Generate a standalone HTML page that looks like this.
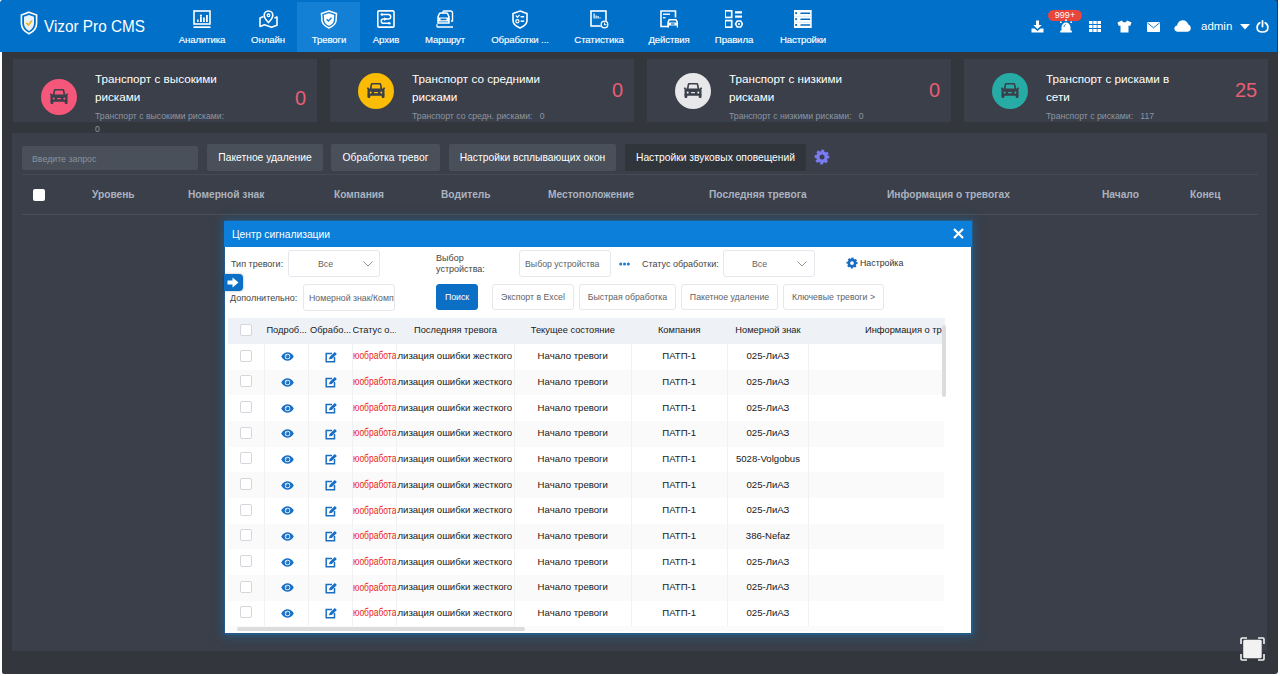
<!DOCTYPE html>
<html><head><meta charset="utf-8">
<style>
*{box-sizing:border-box;margin:0;padding:0}
html,body{width:1280px;height:676px;overflow:hidden;background:#fff;font-family:"Liberation Sans",sans-serif}
.abs{position:absolute}
#win{position:absolute;left:2px;top:0;width:1276px;height:674px;background:#33373d;border-radius:0 0 3px 2px;overflow:hidden}
#hdr{position:absolute;left:0;top:0;width:1277px;height:52px;border-radius:3px 3px 0 0;background:#0070c8}
.nav{position:absolute;top:0;height:51px;color:#fff;font-size:9.5px;text-align:center}
.nav svg{position:absolute;top:10px}
.nav span{position:absolute;top:33.6px;left:0;right:0;white-space:nowrap;font-size:9.6px;letter-spacing:-0.1px;-webkit-text-stroke:0.15px #fff}
.card{position:absolute;top:59px;height:63px;width:304px;background:#3a3f49}
.card .ic{position:absolute;left:28px;top:21px;width:36px;height:36px;border-radius:50%}
.card .t{position:absolute;left:82px;top:11px;color:#fff;font-size:11.7px;line-height:18px;width:160px;white-space:nowrap}
.card .s{position:absolute;left:82px;top:51px;color:#8d96a3;font-size:8.7px;line-height:13px;width:160px;white-space:nowrap}
.card .n{position:absolute;top:21px;color:#e85d75;font-size:20px}
.btn{position:absolute;top:144px;height:27px;background:#4a5059;color:#fff;font-size:10.3px;line-height:28px;text-align:center;border-radius:2px;white-space:nowrap}
.th{position:absolute;top:189px;color:#aab3c0;font-size:10.2px;font-weight:bold;white-space:nowrap}
#modal{position:absolute;left:223px;top:221px;width:746px;height:412px;background:#fff;box-shadow:1px 0 0 1px #255b87,-1px 0 0 0 #255b87,0 2px 0 0 #255b87,0 1px 9px 3px rgba(37,91,135,0.75)}
#mh{position:absolute;left:-1px;top:0;width:748px;height:25.5px;background:#0b7fd9;color:#fff;font-size:10.3px;line-height:28px;padding-left:8px}
.lbl{position:absolute;color:#444;font-size:9px;white-space:nowrap}
.sel{position:absolute;height:27px;border:1px solid #e4e7ec;border-radius:3px;background:#fff;font-size:8.75px;color:#606266;line-height:26px;white-space:nowrap;overflow:hidden}
.mb{position:absolute;top:63px;height:26px;border:1px solid #e4e7ec;border-radius:3px;background:#fff;font-size:8.75px;color:#606266;line-height:25px;text-align:center;white-space:nowrap}
.tr{position:absolute;left:3px;width:716px;height:25.67px}
.tr.alt{background:#fafafa}
.cb{position:absolute;width:12px;height:12px;border:1px solid #d3d6db;border-radius:2px;background:#fff}
.ct{position:absolute;font-size:9.6px;color:#1a1a1a;white-space:nowrap}
.tr .ct{-webkit-text-stroke:0.03px currentColor}
.vl{position:absolute;top:97px;width:1px;height:310px;background:#f0f1f3}
</style></head><body>
<div id="win">
<div class="card" style="left:11px"><div class="ic" style="background:#f4577a;top:20px"><svg class="abs" style="left:9px;top:10px" width="18" height="15" viewBox="0 0 18 15"><path d="M3.6 6 L4.4 1.6 C4.5 1 4.9 0.7 5.5 0.7 H12.5 C13.1 0.7 13.5 1 13.6 1.6 L14.4 6" fill="none" stroke="#3a3f49" stroke-width="1.6"/><rect x="0" y="4.6" width="1.8" height="1.4" fill="#3a3f49"/><rect x="16.2" y="4.6" width="1.8" height="1.4" fill="#3a3f49"/><rect x="0.5" y="5.6" width="17" height="7.2" rx="1.2" fill="#3a3f49"/><rect x="0.5" y="11" width="2.8" height="4" rx="1" fill="#3a3f49"/><rect x="14.7" y="11" width="2.8" height="4" rx="1" fill="#3a3f49"/><circle cx="3.7" cy="9.6" r="1.05" fill="#f4577a"/><circle cx="14.3" cy="9.6" r="1.05" fill="#f4577a"/><rect x="7" y="9" width="4" height="1.3" rx="0.4" fill="#f4577a"/></svg></div><div class="t">Транспорт с высокими<br>рисками</div><div class="s">Транспорт с высокими рисками:<br>0</div><div class="n" style="left:282px;top:28px">0</div></div>
<div class="card" style="left:328px"><div class="ic" style="background:#fbbc05;top:14px"><svg class="abs" style="left:9px;top:10px" width="18" height="15" viewBox="0 0 18 15"><path d="M3.6 6 L4.4 1.6 C4.5 1 4.9 0.7 5.5 0.7 H12.5 C13.1 0.7 13.5 1 13.6 1.6 L14.4 6" fill="none" stroke="#3a3f49" stroke-width="1.6"/><rect x="0" y="4.6" width="1.8" height="1.4" fill="#3a3f49"/><rect x="16.2" y="4.6" width="1.8" height="1.4" fill="#3a3f49"/><rect x="0.5" y="5.6" width="17" height="7.2" rx="1.2" fill="#3a3f49"/><rect x="0.5" y="11" width="2.8" height="4" rx="1" fill="#3a3f49"/><rect x="14.7" y="11" width="2.8" height="4" rx="1" fill="#3a3f49"/><circle cx="3.7" cy="9.6" r="1.05" fill="#fbbc05"/><circle cx="14.3" cy="9.6" r="1.05" fill="#fbbc05"/><rect x="7" y="9" width="4" height="1.3" rx="0.4" fill="#fbbc05"/></svg></div><div class="t">Транспорт со средними<br>рисками</div><div class="s">Транспорт со средн. рисками:&nbsp;&nbsp;&nbsp;0</div><div class="n" style="left:282px;top:20px">0</div></div>
<div class="card" style="left:645px"><div class="ic" style="background:#e8e8ea;top:14px"><svg class="abs" style="left:9px;top:10px" width="18" height="15" viewBox="0 0 18 15"><path d="M3.6 6 L4.4 1.6 C4.5 1 4.9 0.7 5.5 0.7 H12.5 C13.1 0.7 13.5 1 13.6 1.6 L14.4 6" fill="none" stroke="#3a3f49" stroke-width="1.6"/><rect x="0" y="4.6" width="1.8" height="1.4" fill="#3a3f49"/><rect x="16.2" y="4.6" width="1.8" height="1.4" fill="#3a3f49"/><rect x="0.5" y="5.6" width="17" height="7.2" rx="1.2" fill="#3a3f49"/><rect x="0.5" y="11" width="2.8" height="4" rx="1" fill="#3a3f49"/><rect x="14.7" y="11" width="2.8" height="4" rx="1" fill="#3a3f49"/><circle cx="3.7" cy="9.6" r="1.05" fill="#e8e8ea"/><circle cx="14.3" cy="9.6" r="1.05" fill="#e8e8ea"/><rect x="7" y="9" width="4" height="1.3" rx="0.4" fill="#e8e8ea"/></svg></div><div class="t">Транспорт с низкими<br>рисками</div><div class="s">Транспорт с низкими рисками:&nbsp;&nbsp;&nbsp;0</div><div class="n" style="left:282px;top:20px">0</div></div>
<div class="card" style="left:962px"><div class="ic" style="background:#27aba5;top:14px"><svg class="abs" style="left:9px;top:10px" width="18" height="15" viewBox="0 0 18 15"><path d="M3.6 6 L4.4 1.6 C4.5 1 4.9 0.7 5.5 0.7 H12.5 C13.1 0.7 13.5 1 13.6 1.6 L14.4 6" fill="none" stroke="#3a3f49" stroke-width="1.6"/><rect x="0" y="4.6" width="1.8" height="1.4" fill="#3a3f49"/><rect x="16.2" y="4.6" width="1.8" height="1.4" fill="#3a3f49"/><rect x="0.5" y="5.6" width="17" height="7.2" rx="1.2" fill="#3a3f49"/><rect x="0.5" y="11" width="2.8" height="4" rx="1" fill="#3a3f49"/><rect x="14.7" y="11" width="2.8" height="4" rx="1" fill="#3a3f49"/><circle cx="3.7" cy="9.6" r="1.05" fill="#27aba5"/><circle cx="14.3" cy="9.6" r="1.05" fill="#27aba5"/><rect x="7" y="9" width="4" height="1.3" rx="0.4" fill="#27aba5"/></svg></div><div class="t">Транспорт с рисками в<br>сети</div><div class="s">Транспорт с рисками:&nbsp;&nbsp;&nbsp;117</div><div class="n" style="left:271px;top:20px">25</div></div>
<div class="abs" style="left:10px;top:133px;width:1255px;height:518px;background:#3a3f49"></div>
<div class="abs" style="left:20px;top:146px;width:176px;height:24px;background:#4a5059;border-radius:2px;color:#8a929d;font-size:8.8px;line-height:26px;padding-left:10px">Введите запрос</div>
<div class="btn" style="left:205px;width:116px">Пакетное удаление</div>
<div class="btn" style="left:329px;width:109px">Обработка тревог</div>
<div class="btn" style="left:447px;width:167px">Настройки всплывающих окон</div>
<div class="btn" style="left:623px;width:181px;background:#30353b">Настройки звуковых оповещений</div>
<svg class="abs" style="left:812px;top:149px" width="16" height="16" viewBox="0 0 16 16"><circle cx="8" cy="8" r="5.9" fill="#7b7bf5"/><circle cx="8" cy="8" r="6.1" fill="none" stroke="#7b7bf5" stroke-width="2.6" stroke-dasharray="2.635 2.156" stroke-linejoin="round" transform="rotate(-12.4 8 8)"/><circle cx="8" cy="8" r="2.5" fill="#3a3f49"/></svg>
<div class="abs" style="left:20px;top:174px;width:1236px;height:1px;background:#454b53"></div>
<div class="abs" style="left:31px;top:189px;width:11.5px;height:11.5px;background:#fff;border-radius:2px"></div>
<div class="th" style="left:90px">Уровень</div>
<div class="th" style="left:186px">Номерной знак</div>
<div class="th" style="left:332px">Компания</div>
<div class="th" style="left:439px">Водитель</div>
<div class="th" style="left:546px">Местоположение</div>
<div class="th" style="left:707px">Последняя тревога</div>
<div class="th" style="left:885px">Информация о тревогах</div>
<div class="th" style="left:1100px">Начало</div>
<div class="th" style="left:1188px">Конец</div>
<div class="abs" style="left:20px;top:214px;width:1236px;height:1px;background:#4a5058"></div>
<svg class="abs" style="left:1238px;top:637px" width="25" height="24" viewBox="0 0 25 24"><rect x="3.2" y="2.8" width="18.5" height="18.5" rx="1.5" fill="#f2f2f2"/><path d="M1 7 V2 C1 1.4 1.4 1 2 1 H7 M18 1 H23 C23.6 1 24 1.4 24 2 V7 M24 17 V22 C24 22.6 23.6 23 23 23 H18 M7 23 H2 C1.4 23 1 22.6 1 22 V17" fill="none" stroke="#f2f2f2" stroke-width="1.6"/></svg>

<div id="modal">
<div id="mh">Центр сигнализации</div>
<svg class="abs" style="left:728px;top:7px" width="11" height="11" viewBox="0 0 11 11"><path d="M1 1 L10 10 M10 1 L1 10" stroke="#fff" stroke-width="2.2"/></svg>
<div class="lbl" style="left:6px;top:38px">Тип тревоги:</div>
<div class="sel" style="left:63px;top:29px;width:92px;padding-left:29px">Все</div>
<svg class="abs" style="left:138px;top:40px" width="10" height="6" viewBox="0 0 10 6"><path d="M0.5 0.5 L5 5 L9.5 0.5" fill="none" stroke="#999" stroke-width="1"/></svg>
<div class="lbl" style="left:211px;top:32px;line-height:11px">Выбор<br>устройства:</div>
<div class="sel" style="left:294px;top:29px;width:92px;padding-left:5px">Выбор устройства</div>
<svg class="abs" style="left:394px;top:41px" width="11" height="4" viewBox="0 0 11 4"><circle cx="1.7" cy="2" r="1.5" fill="#1a7ad4"/><circle cx="5.5" cy="2" r="1.5" fill="#1a7ad4"/><circle cx="9.3" cy="2" r="1.5" fill="#1a7ad4"/></svg>
<div class="lbl" style="left:417px;top:38px">Статус обработки:</div>
<div class="sel" style="left:498px;top:29px;width:92px;padding-left:28px">Все</div>
<svg class="abs" style="left:572px;top:40px" width="10" height="6" viewBox="0 0 10 6"><path d="M0.5 0.5 L5 5 L9.5 0.5" fill="none" stroke="#999" stroke-width="1"/></svg>
<svg class="abs" style="left:621px;top:36px" width="12" height="12" viewBox="0 0 16 16"><circle cx="8" cy="8" r="5.9" fill="#1a6cc0"/><circle cx="8" cy="8" r="6.1" fill="none" stroke="#1a6cc0" stroke-width="2.6" stroke-dasharray="2.635 2.156" stroke-linejoin="round" transform="rotate(-12.4 8 8)"/><circle cx="8" cy="8" r="2.5" fill="#fff"/></svg>
<div class="lbl" style="left:635px;top:36.5px;font-size:8.8px;color:#333">Настройка</div>
<div class="lbl" style="left:5px;top:72px">Дополнительно:</div>
<div class="sel" style="left:78px;top:63px;width:92px;padding-left:5px">Номерной знак/Компания</div>
<div class="mb" style="left:211px;width:42px;background:#0b6fc6;border-color:#0b6fc6;color:#fff">Поиск</div>
<div class="mb" style="left:267px;width:82px">Экспорт в Excel</div>
<div class="mb" style="left:354px;width:97px">Быстрая обработка</div>
<div class="mb" style="left:456px;width:97px">Пакетное удаление</div>
<div class="mb" style="left:558px;width:101px">Ключевые тревоги &gt;</div>
<div class="abs" style="left:3px;top:97px;width:717px;height:26px;background:#eef1f6"></div>
<div class="cb" style="left:15px;top:103px"></div>
<div class="ct" style="left:39.6px;width:44.2px;text-align:center;top:104px;font-size:9.3px">Подроб...</div>
<div class="ct" style="left:83.8px;width:43.6px;text-align:center;top:104px;font-size:9.3px">Обрабо...</div>
<div class="ct" style="left:127.4px;width:44.2px;text-align:center;top:104px;font-size:9.3px">Статус о...</div>
<div class="ct" style="left:171.6px;width:117.8px;text-align:center;top:104px;font-size:9.3px">Последняя тревога</div>
<div class="ct" style="left:289.4px;width:116.8px;text-align:center;top:104px;font-size:9.3px">Текущее состояние</div>
<div class="ct" style="left:406.2px;width:96.1px;text-align:center;top:104px;font-size:9.3px">Компания</div>
<div class="ct" style="left:502.3px;width:81.3px;text-align:center;top:104px;font-size:9.3px">Номерной знак</div>
<div class="ct" style="left:640px;top:104px;font-size:9.3px;width:79px;overflow:hidden">Информация о тревогах</div>
<div class="tr" style="top:123.0px"><div class="cb" style="top:5.5px;left:12px"></div><svg class="abs" style="left:53px;top:8.3px" width="13" height="9" viewBox="0 0 13 9"><path d="M0.2 4.5 C2 1.4 4.2 0.2 6.5 0.2 C8.8 0.2 11 1.4 12.8 4.5 C11 7.6 8.8 8.8 6.5 8.8 C4.2 8.8 2 7.6 0.2 4.5 Z" fill="#1a6fc4"/><circle cx="6.5" cy="4.5" r="2.7" fill="#fff"/><circle cx="6.5" cy="4.5" r="2" fill="#1a6fc4"/><circle cx="5.7" cy="3.8" r="0.6" fill="#cfe3f7"/></svg><svg class="abs" style="left:97px;top:7.5px" width="12" height="11" viewBox="0 0 12 11"><path d="M7 1.5 H1.2 V9.8 H9.5 V5" fill="none" stroke="#1a6fc4" stroke-width="1.5"/><path d="M4 7.2 L4.6 5 L9.8 0 L11.9 2 L6.7 7 Z" fill="#1a6fc4"/></svg><div class="ct" style="left:125px;top:6.3px;width:44px;height:14px;overflow:hidden;color:#ee1c1c"><span style="position:absolute;left:0;top:0.2px;font-size:10px;transform:scaleX(0.85);transform-origin:0 0">юобработа</span></div><div class="ct" style="left:169px;top:6.3px;width:117px;height:14px;overflow:hidden"><span style="position:absolute;left:-26px;top:0">Сигнализация ошибки жесткого диска</span></div><div class="ct" style="left:286.4px;width:116.8px;text-align:center;top:6.3px">Начало тревоги</div><div class="ct" style="left:403.2px;width:96.1px;text-align:center;top:6.3px">ПАТП-1</div><div class="ct" style="left:499.3px;width:81.3px;text-align:center;top:6.3px">025-ЛиАЗ</div></div>
<div class="tr alt" style="top:148.67px"><div class="cb" style="top:5.5px;left:12px"></div><svg class="abs" style="left:53px;top:8.3px" width="13" height="9" viewBox="0 0 13 9"><path d="M0.2 4.5 C2 1.4 4.2 0.2 6.5 0.2 C8.8 0.2 11 1.4 12.8 4.5 C11 7.6 8.8 8.8 6.5 8.8 C4.2 8.8 2 7.6 0.2 4.5 Z" fill="#1a6fc4"/><circle cx="6.5" cy="4.5" r="2.7" fill="#fff"/><circle cx="6.5" cy="4.5" r="2" fill="#1a6fc4"/><circle cx="5.7" cy="3.8" r="0.6" fill="#cfe3f7"/></svg><svg class="abs" style="left:97px;top:7.5px" width="12" height="11" viewBox="0 0 12 11"><path d="M7 1.5 H1.2 V9.8 H9.5 V5" fill="none" stroke="#1a6fc4" stroke-width="1.5"/><path d="M4 7.2 L4.6 5 L9.8 0 L11.9 2 L6.7 7 Z" fill="#1a6fc4"/></svg><div class="ct" style="left:125px;top:6.3px;width:44px;height:14px;overflow:hidden;color:#ee1c1c"><span style="position:absolute;left:0;top:0.2px;font-size:10px;transform:scaleX(0.85);transform-origin:0 0">юобработа</span></div><div class="ct" style="left:169px;top:6.3px;width:117px;height:14px;overflow:hidden"><span style="position:absolute;left:-26px;top:0">Сигнализация ошибки жесткого диска</span></div><div class="ct" style="left:286.4px;width:116.8px;text-align:center;top:6.3px">Начало тревоги</div><div class="ct" style="left:403.2px;width:96.1px;text-align:center;top:6.3px">ПАТП-1</div><div class="ct" style="left:499.3px;width:81.3px;text-align:center;top:6.3px">025-ЛиАЗ</div></div>
<div class="tr" style="top:174.34px"><div class="cb" style="top:5.5px;left:12px"></div><svg class="abs" style="left:53px;top:8.3px" width="13" height="9" viewBox="0 0 13 9"><path d="M0.2 4.5 C2 1.4 4.2 0.2 6.5 0.2 C8.8 0.2 11 1.4 12.8 4.5 C11 7.6 8.8 8.8 6.5 8.8 C4.2 8.8 2 7.6 0.2 4.5 Z" fill="#1a6fc4"/><circle cx="6.5" cy="4.5" r="2.7" fill="#fff"/><circle cx="6.5" cy="4.5" r="2" fill="#1a6fc4"/><circle cx="5.7" cy="3.8" r="0.6" fill="#cfe3f7"/></svg><svg class="abs" style="left:97px;top:7.5px" width="12" height="11" viewBox="0 0 12 11"><path d="M7 1.5 H1.2 V9.8 H9.5 V5" fill="none" stroke="#1a6fc4" stroke-width="1.5"/><path d="M4 7.2 L4.6 5 L9.8 0 L11.9 2 L6.7 7 Z" fill="#1a6fc4"/></svg><div class="ct" style="left:125px;top:6.3px;width:44px;height:14px;overflow:hidden;color:#ee1c1c"><span style="position:absolute;left:0;top:0.2px;font-size:10px;transform:scaleX(0.85);transform-origin:0 0">юобработа</span></div><div class="ct" style="left:169px;top:6.3px;width:117px;height:14px;overflow:hidden"><span style="position:absolute;left:-26px;top:0">Сигнализация ошибки жесткого диска</span></div><div class="ct" style="left:286.4px;width:116.8px;text-align:center;top:6.3px">Начало тревоги</div><div class="ct" style="left:403.2px;width:96.1px;text-align:center;top:6.3px">ПАТП-1</div><div class="ct" style="left:499.3px;width:81.3px;text-align:center;top:6.3px">025-ЛиАЗ</div></div>
<div class="tr alt" style="top:200.01px"><div class="cb" style="top:5.5px;left:12px"></div><svg class="abs" style="left:53px;top:8.3px" width="13" height="9" viewBox="0 0 13 9"><path d="M0.2 4.5 C2 1.4 4.2 0.2 6.5 0.2 C8.8 0.2 11 1.4 12.8 4.5 C11 7.6 8.8 8.8 6.5 8.8 C4.2 8.8 2 7.6 0.2 4.5 Z" fill="#1a6fc4"/><circle cx="6.5" cy="4.5" r="2.7" fill="#fff"/><circle cx="6.5" cy="4.5" r="2" fill="#1a6fc4"/><circle cx="5.7" cy="3.8" r="0.6" fill="#cfe3f7"/></svg><svg class="abs" style="left:97px;top:7.5px" width="12" height="11" viewBox="0 0 12 11"><path d="M7 1.5 H1.2 V9.8 H9.5 V5" fill="none" stroke="#1a6fc4" stroke-width="1.5"/><path d="M4 7.2 L4.6 5 L9.8 0 L11.9 2 L6.7 7 Z" fill="#1a6fc4"/></svg><div class="ct" style="left:125px;top:6.3px;width:44px;height:14px;overflow:hidden;color:#ee1c1c"><span style="position:absolute;left:0;top:0.2px;font-size:10px;transform:scaleX(0.85);transform-origin:0 0">юобработа</span></div><div class="ct" style="left:169px;top:6.3px;width:117px;height:14px;overflow:hidden"><span style="position:absolute;left:-26px;top:0">Сигнализация ошибки жесткого диска</span></div><div class="ct" style="left:286.4px;width:116.8px;text-align:center;top:6.3px">Начало тревоги</div><div class="ct" style="left:403.2px;width:96.1px;text-align:center;top:6.3px">ПАТП-1</div><div class="ct" style="left:499.3px;width:81.3px;text-align:center;top:6.3px">025-ЛиАЗ</div></div>
<div class="tr" style="top:225.68px"><div class="cb" style="top:5.5px;left:12px"></div><svg class="abs" style="left:53px;top:8.3px" width="13" height="9" viewBox="0 0 13 9"><path d="M0.2 4.5 C2 1.4 4.2 0.2 6.5 0.2 C8.8 0.2 11 1.4 12.8 4.5 C11 7.6 8.8 8.8 6.5 8.8 C4.2 8.8 2 7.6 0.2 4.5 Z" fill="#1a6fc4"/><circle cx="6.5" cy="4.5" r="2.7" fill="#fff"/><circle cx="6.5" cy="4.5" r="2" fill="#1a6fc4"/><circle cx="5.7" cy="3.8" r="0.6" fill="#cfe3f7"/></svg><svg class="abs" style="left:97px;top:7.5px" width="12" height="11" viewBox="0 0 12 11"><path d="M7 1.5 H1.2 V9.8 H9.5 V5" fill="none" stroke="#1a6fc4" stroke-width="1.5"/><path d="M4 7.2 L4.6 5 L9.8 0 L11.9 2 L6.7 7 Z" fill="#1a6fc4"/></svg><div class="ct" style="left:125px;top:6.3px;width:44px;height:14px;overflow:hidden;color:#ee1c1c"><span style="position:absolute;left:0;top:0.2px;font-size:10px;transform:scaleX(0.85);transform-origin:0 0">юобработа</span></div><div class="ct" style="left:169px;top:6.3px;width:117px;height:14px;overflow:hidden"><span style="position:absolute;left:-26px;top:0">Сигнализация ошибки жесткого диска</span></div><div class="ct" style="left:286.4px;width:116.8px;text-align:center;top:6.3px">Начало тревоги</div><div class="ct" style="left:403.2px;width:96.1px;text-align:center;top:6.3px">ПАТП-1</div><div class="ct" style="left:499.3px;width:81.3px;text-align:center;top:6.3px">5028-Volgobus</div></div>
<div class="tr alt" style="top:251.35px"><div class="cb" style="top:5.5px;left:12px"></div><svg class="abs" style="left:53px;top:8.3px" width="13" height="9" viewBox="0 0 13 9"><path d="M0.2 4.5 C2 1.4 4.2 0.2 6.5 0.2 C8.8 0.2 11 1.4 12.8 4.5 C11 7.6 8.8 8.8 6.5 8.8 C4.2 8.8 2 7.6 0.2 4.5 Z" fill="#1a6fc4"/><circle cx="6.5" cy="4.5" r="2.7" fill="#fff"/><circle cx="6.5" cy="4.5" r="2" fill="#1a6fc4"/><circle cx="5.7" cy="3.8" r="0.6" fill="#cfe3f7"/></svg><svg class="abs" style="left:97px;top:7.5px" width="12" height="11" viewBox="0 0 12 11"><path d="M7 1.5 H1.2 V9.8 H9.5 V5" fill="none" stroke="#1a6fc4" stroke-width="1.5"/><path d="M4 7.2 L4.6 5 L9.8 0 L11.9 2 L6.7 7 Z" fill="#1a6fc4"/></svg><div class="ct" style="left:125px;top:6.3px;width:44px;height:14px;overflow:hidden;color:#ee1c1c"><span style="position:absolute;left:0;top:0.2px;font-size:10px;transform:scaleX(0.85);transform-origin:0 0">юобработа</span></div><div class="ct" style="left:169px;top:6.3px;width:117px;height:14px;overflow:hidden"><span style="position:absolute;left:-26px;top:0">Сигнализация ошибки жесткого диска</span></div><div class="ct" style="left:286.4px;width:116.8px;text-align:center;top:6.3px">Начало тревоги</div><div class="ct" style="left:403.2px;width:96.1px;text-align:center;top:6.3px">ПАТП-1</div><div class="ct" style="left:499.3px;width:81.3px;text-align:center;top:6.3px">025-ЛиАЗ</div></div>
<div class="tr" style="top:277.02px"><div class="cb" style="top:5.5px;left:12px"></div><svg class="abs" style="left:53px;top:8.3px" width="13" height="9" viewBox="0 0 13 9"><path d="M0.2 4.5 C2 1.4 4.2 0.2 6.5 0.2 C8.8 0.2 11 1.4 12.8 4.5 C11 7.6 8.8 8.8 6.5 8.8 C4.2 8.8 2 7.6 0.2 4.5 Z" fill="#1a6fc4"/><circle cx="6.5" cy="4.5" r="2.7" fill="#fff"/><circle cx="6.5" cy="4.5" r="2" fill="#1a6fc4"/><circle cx="5.7" cy="3.8" r="0.6" fill="#cfe3f7"/></svg><svg class="abs" style="left:97px;top:7.5px" width="12" height="11" viewBox="0 0 12 11"><path d="M7 1.5 H1.2 V9.8 H9.5 V5" fill="none" stroke="#1a6fc4" stroke-width="1.5"/><path d="M4 7.2 L4.6 5 L9.8 0 L11.9 2 L6.7 7 Z" fill="#1a6fc4"/></svg><div class="ct" style="left:125px;top:6.3px;width:44px;height:14px;overflow:hidden;color:#ee1c1c"><span style="position:absolute;left:0;top:0.2px;font-size:10px;transform:scaleX(0.85);transform-origin:0 0">юобработа</span></div><div class="ct" style="left:169px;top:6.3px;width:117px;height:14px;overflow:hidden"><span style="position:absolute;left:-26px;top:0">Сигнализация ошибки жесткого диска</span></div><div class="ct" style="left:286.4px;width:116.8px;text-align:center;top:6.3px">Начало тревоги</div><div class="ct" style="left:403.2px;width:96.1px;text-align:center;top:6.3px">ПАТП-1</div><div class="ct" style="left:499.3px;width:81.3px;text-align:center;top:6.3px">025-ЛиАЗ</div></div>
<div class="tr alt" style="top:302.69px"><div class="cb" style="top:5.5px;left:12px"></div><svg class="abs" style="left:53px;top:8.3px" width="13" height="9" viewBox="0 0 13 9"><path d="M0.2 4.5 C2 1.4 4.2 0.2 6.5 0.2 C8.8 0.2 11 1.4 12.8 4.5 C11 7.6 8.8 8.8 6.5 8.8 C4.2 8.8 2 7.6 0.2 4.5 Z" fill="#1a6fc4"/><circle cx="6.5" cy="4.5" r="2.7" fill="#fff"/><circle cx="6.5" cy="4.5" r="2" fill="#1a6fc4"/><circle cx="5.7" cy="3.8" r="0.6" fill="#cfe3f7"/></svg><svg class="abs" style="left:97px;top:7.5px" width="12" height="11" viewBox="0 0 12 11"><path d="M7 1.5 H1.2 V9.8 H9.5 V5" fill="none" stroke="#1a6fc4" stroke-width="1.5"/><path d="M4 7.2 L4.6 5 L9.8 0 L11.9 2 L6.7 7 Z" fill="#1a6fc4"/></svg><div class="ct" style="left:125px;top:6.3px;width:44px;height:14px;overflow:hidden;color:#ee1c1c"><span style="position:absolute;left:0;top:0.2px;font-size:10px;transform:scaleX(0.85);transform-origin:0 0">юобработа</span></div><div class="ct" style="left:169px;top:6.3px;width:117px;height:14px;overflow:hidden"><span style="position:absolute;left:-26px;top:0">Сигнализация ошибки жесткого диска</span></div><div class="ct" style="left:286.4px;width:116.8px;text-align:center;top:6.3px">Начало тревоги</div><div class="ct" style="left:403.2px;width:96.1px;text-align:center;top:6.3px">ПАТП-1</div><div class="ct" style="left:499.3px;width:81.3px;text-align:center;top:6.3px">386-Nefaz</div></div>
<div class="tr" style="top:328.36px"><div class="cb" style="top:5.5px;left:12px"></div><svg class="abs" style="left:53px;top:8.3px" width="13" height="9" viewBox="0 0 13 9"><path d="M0.2 4.5 C2 1.4 4.2 0.2 6.5 0.2 C8.8 0.2 11 1.4 12.8 4.5 C11 7.6 8.8 8.8 6.5 8.8 C4.2 8.8 2 7.6 0.2 4.5 Z" fill="#1a6fc4"/><circle cx="6.5" cy="4.5" r="2.7" fill="#fff"/><circle cx="6.5" cy="4.5" r="2" fill="#1a6fc4"/><circle cx="5.7" cy="3.8" r="0.6" fill="#cfe3f7"/></svg><svg class="abs" style="left:97px;top:7.5px" width="12" height="11" viewBox="0 0 12 11"><path d="M7 1.5 H1.2 V9.8 H9.5 V5" fill="none" stroke="#1a6fc4" stroke-width="1.5"/><path d="M4 7.2 L4.6 5 L9.8 0 L11.9 2 L6.7 7 Z" fill="#1a6fc4"/></svg><div class="ct" style="left:125px;top:6.3px;width:44px;height:14px;overflow:hidden;color:#ee1c1c"><span style="position:absolute;left:0;top:0.2px;font-size:10px;transform:scaleX(0.85);transform-origin:0 0">юобработа</span></div><div class="ct" style="left:169px;top:6.3px;width:117px;height:14px;overflow:hidden"><span style="position:absolute;left:-26px;top:0">Сигнализация ошибки жесткого диска</span></div><div class="ct" style="left:286.4px;width:116.8px;text-align:center;top:6.3px">Начало тревоги</div><div class="ct" style="left:403.2px;width:96.1px;text-align:center;top:6.3px">ПАТП-1</div><div class="ct" style="left:499.3px;width:81.3px;text-align:center;top:6.3px">025-ЛиАЗ</div></div>
<div class="tr alt" style="top:354.03px"><div class="cb" style="top:5.5px;left:12px"></div><svg class="abs" style="left:53px;top:8.3px" width="13" height="9" viewBox="0 0 13 9"><path d="M0.2 4.5 C2 1.4 4.2 0.2 6.5 0.2 C8.8 0.2 11 1.4 12.8 4.5 C11 7.6 8.8 8.8 6.5 8.8 C4.2 8.8 2 7.6 0.2 4.5 Z" fill="#1a6fc4"/><circle cx="6.5" cy="4.5" r="2.7" fill="#fff"/><circle cx="6.5" cy="4.5" r="2" fill="#1a6fc4"/><circle cx="5.7" cy="3.8" r="0.6" fill="#cfe3f7"/></svg><svg class="abs" style="left:97px;top:7.5px" width="12" height="11" viewBox="0 0 12 11"><path d="M7 1.5 H1.2 V9.8 H9.5 V5" fill="none" stroke="#1a6fc4" stroke-width="1.5"/><path d="M4 7.2 L4.6 5 L9.8 0 L11.9 2 L6.7 7 Z" fill="#1a6fc4"/></svg><div class="ct" style="left:125px;top:6.3px;width:44px;height:14px;overflow:hidden;color:#ee1c1c"><span style="position:absolute;left:0;top:0.2px;font-size:10px;transform:scaleX(0.85);transform-origin:0 0">юобработа</span></div><div class="ct" style="left:169px;top:6.3px;width:117px;height:14px;overflow:hidden"><span style="position:absolute;left:-26px;top:0">Сигнализация ошибки жесткого диска</span></div><div class="ct" style="left:286.4px;width:116.8px;text-align:center;top:6.3px">Начало тревоги</div><div class="ct" style="left:403.2px;width:96.1px;text-align:center;top:6.3px">ПАТП-1</div><div class="ct" style="left:499.3px;width:81.3px;text-align:center;top:6.3px">025-ЛиАЗ</div></div>
<div class="tr" style="top:379.7px"><div class="cb" style="top:5.5px;left:12px"></div><svg class="abs" style="left:53px;top:8.3px" width="13" height="9" viewBox="0 0 13 9"><path d="M0.2 4.5 C2 1.4 4.2 0.2 6.5 0.2 C8.8 0.2 11 1.4 12.8 4.5 C11 7.6 8.8 8.8 6.5 8.8 C4.2 8.8 2 7.6 0.2 4.5 Z" fill="#1a6fc4"/><circle cx="6.5" cy="4.5" r="2.7" fill="#fff"/><circle cx="6.5" cy="4.5" r="2" fill="#1a6fc4"/><circle cx="5.7" cy="3.8" r="0.6" fill="#cfe3f7"/></svg><svg class="abs" style="left:97px;top:7.5px" width="12" height="11" viewBox="0 0 12 11"><path d="M7 1.5 H1.2 V9.8 H9.5 V5" fill="none" stroke="#1a6fc4" stroke-width="1.5"/><path d="M4 7.2 L4.6 5 L9.8 0 L11.9 2 L6.7 7 Z" fill="#1a6fc4"/></svg><div class="ct" style="left:125px;top:6.3px;width:44px;height:14px;overflow:hidden;color:#ee1c1c"><span style="position:absolute;left:0;top:0.2px;font-size:10px;transform:scaleX(0.85);transform-origin:0 0">юобработа</span></div><div class="ct" style="left:169px;top:6.3px;width:117px;height:14px;overflow:hidden"><span style="position:absolute;left:-26px;top:0">Сигнализация ошибки жесткого диска</span></div><div class="ct" style="left:286.4px;width:116.8px;text-align:center;top:6.3px">Начало тревоги</div><div class="ct" style="left:403.2px;width:96.1px;text-align:center;top:6.3px">ПАТП-1</div><div class="ct" style="left:499.3px;width:81.3px;text-align:center;top:6.3px">025-ЛиАЗ</div></div>
<div class="vl" style="left:39px"></div>
<div class="vl" style="left:83px"></div>
<div class="vl" style="left:127px"></div>
<div class="vl" style="left:171px"></div>
<div class="vl" style="left:289px"></div>
<div class="vl" style="left:406px"></div>
<div class="vl" style="left:502px"></div>
<div class="vl" style="left:583px"></div>
<div class="abs" style="left:717px;top:104px;width:4px;height:72px;background:#dcdcdc;border-radius:2px"></div>
<div class="abs" style="left:3px;top:405px;width:716px;height:5px;background:#fbfbfc"></div>
<div class="abs" style="left:12px;top:406px;width:288px;height:4px;background:#dcdcdc;border-radius:2px"></div>
</div>
<div class="abs" style="left:222px;top:274px;width:19px;height:17px;background:#0b6fc6;border-radius:0 4px 4px 0;box-shadow:0 0 3px rgba(0,0,0,0.3)"><svg class="abs" style="left:3px;top:3px" width="12" height="11" viewBox="0 0 12 11"><path d="M0.5 3.5 H5.5 V0.5 L11.5 5.5 L5.5 10.5 V7.5 H0.5 Z" fill="#fff"/></svg></div>
</div>
<div id="hdr">
<svg class="abs" style="left:20px;top:11px" width="18" height="24" viewBox="0 0 18 24">
   <path d="M9 1.2 L16.6 4 V12.5 C16.6 17.5 13 20.8 9 22.8 C5 20.8 1.4 17.5 1.4 12.5 V4 Z" fill="none" stroke="#fff" stroke-width="1.6"/>
   <path d="M9 4 L14 5.8 V12.5 C14 16 11.6 18.6 9 20 C6.4 18.6 4 16 4 12.5 V5.8 Z" fill="#fff" opacity="0.9"/>
   <path d="M6.2 11.8 L8.4 14 L12 9.6" fill="none" stroke="#f2b51a" stroke-width="1.6"/>
  </svg>
<div class="abs" style="left:44px;top:17px;color:#fff;font-size:16.5px;white-space:nowrap;transform:scaleX(0.928);transform-origin:0 0">Vizor Pro CMS</div>
<div class="abs" style="left:297px;top:2px;width:63px;height:50px;background:#1380d6"></div>
<div class="nav" style="left:172px;width:60px"><svg style="left:21px" width="18" height="18" viewBox="0 0 18 18"><rect x="1" y="1" width="16" height="13" fill="none" stroke="#fff" stroke-width="1.6"/><rect x="0.5" y="16.3" width="17" height="1.7" fill="#fff"/><rect x="4" y="9.5" width="1.6" height="2.5" fill="#fff"/><rect x="7" y="6.5" width="1.8" height="5.5" fill="#fff"/><circle cx="7.9" cy="5.5" r="1.1" fill="#fff"/><rect x="10" y="7.5" width="1.8" height="4.5" fill="#fff"/><rect x="13" y="5" width="1.8" height="7" fill="#fff"/></svg><span>Аналитика</span></div>
  <div class="nav" style="left:238px;width:60px"><svg style="left:21px" width="19" height="18" viewBox="0 0 19 18"><path d="M4.5 6.5 L1 8 V16.5 L5.5 14.8 L12.5 17.2 L18 15.3 V7 L15.5 8" fill="none" stroke="#fff" stroke-width="1.6" stroke-linejoin="round"/><path d="M9.5 1 C6.8 1 5.2 3 5.2 5.2 C5.2 8 9.5 12.5 9.5 12.5 C9.5 12.5 13.8 8 13.8 5.2 C13.8 3 12.2 1 9.5 1 Z" fill="none" stroke="#fff" stroke-width="1.6"/><circle cx="9.5" cy="5.3" r="1.3" fill="none" stroke="#fff" stroke-width="1.3"/></svg><span>Онлайн</span></div>
  <div class="nav" style="left:298px;width:62px"><svg style="left:22px" width="18" height="19" viewBox="0 0 18 19"><path d="M9 1 L16.5 3.5 L16 11 C15.5 14.5 12.5 16.5 9 18 C5.5 16.5 2.5 14.5 2 11 L1.5 3.5 Z" fill="none" stroke="#fff" stroke-width="1.5"/><path d="M9 3.3 L14.2 5 L13.8 10.8 C13.4 13.3 11.4 14.8 9 15.8 C6.6 14.8 4.6 13.3 4.2 10.8 L3.8 5 Z" fill="#fff"/><path d="M6.6 9.3 L8.4 11 L11.5 7.8" fill="none" stroke="#1380d6" stroke-width="1.3"/></svg><span>Тревоги</span></div>
  <div class="nav" style="left:356px;width:60px"><svg style="left:21px" width="18" height="18" viewBox="0 0 18 18"><rect x="0.8" y="0.9" width="16.2" height="16.2" rx="1.2" fill="none" stroke="#fff" stroke-width="1.6"/><path d="M4.8 4.5 H11.4 A2.3 2.3 0 0 1 11.4 9.1 H6.3 A2.05 2.05 0 0 0 6.3 13.2 H12.3" fill="none" stroke="#fff" stroke-width="1.5"/><circle cx="4.8" cy="4.5" r="1.3" fill="#fff"/><circle cx="12.3" cy="13.2" r="1.3" fill="#fff"/><path d="M7.3 7.3 L10 9.1 L7.3 10.9 Z" fill="#fff"/></svg><span>Архив</span></div>
  <div class="nav" style="left:415px;width:60px"><svg style="left:21px" width="18" height="18" viewBox="0 0 18 18"><path d="M7 3.5 V2 C7 1.4 7.5 1 8 1 H14.5 C15.5 1 16.5 2 16.5 3 V11 H15" fill="none" stroke="#fff" stroke-width="1.4"/><path d="M2 13 V7 L3.2 4 C3.5 3.3 4 3 4.8 3 H10.2 C11 3 11.5 3.3 11.8 4 L13 7 V13 Z" fill="none" stroke="#fff" stroke-width="1.5"/><rect x="2" y="7.5" width="11" height="4" fill="#fff"/><rect x="4.5" y="8.6" width="6" height="1.6" fill="#0070c8"/><path d="M1.5 14.5 C0.8 14.5 0.8 17 1.5 17 H17" fill="none" stroke="#fff" stroke-width="1.5"/></svg><span>Маршрут</span></div>
  <div class="nav" style="left:490px;width:60px"><svg style="left:21px" width="18" height="19" viewBox="0 0 18 19"><path d="M9 1 L16 3.5 V10.5 C16 14 12.8 16.5 9 18 C5.2 16.5 2 14 2 10.5 V3.5 Z" fill="none" stroke="#fff" stroke-width="1.6"/><path d="M4.8 5.5 L6.5 7.3 L8.5 4.8" fill="none" stroke="#fff" stroke-width="1.2"/><circle cx="6.4" cy="11.3" r="1.6" fill="none" stroke="#fff" stroke-width="1.2"/><rect x="9.6" y="6" width="3.6" height="1.5" fill="#fff"/><rect x="9.6" y="10.4" width="3.6" height="1.5" fill="#fff"/></svg><span>Обработки ...</span></div>
  <div class="nav" style="left:569px;width:60px"><svg style="left:21px" width="19" height="19" viewBox="0 0 19 19"><rect x="1" y="1" width="15" height="15" fill="none" stroke="#fff" stroke-width="1.6"/><rect x="3.5" y="3.5" width="1.2" height="5" fill="#fff"/><rect x="5.5" y="5.5" width="1.2" height="3" fill="#fff"/><rect x="7.5" y="6" width="1.2" height="2.5" fill="#fff"/><rect x="9.5" y="7.5" width="1.2" height="1" fill="#fff"/><circle cx="14.5" cy="14.5" r="4" fill="#0070c8"/><circle cx="14.5" cy="14.5" r="3.3" fill="none" stroke="#fff" stroke-width="1.3"/><path d="M14.5 12.5 V14.7 H16.5" fill="none" stroke="#fff" stroke-width="1.1"/></svg><span>Статистика</span></div>
  <div class="nav" style="left:639px;width:60px"><svg style="left:21px" width="18" height="18" viewBox="0 0 18 18"><path d="M9 16.5 H1 V1 H15.5 V7.5" fill="none" stroke="#fff" stroke-width="1.6"/><rect x="3" y="3.5" width="7" height="1.4" fill="#fff"/><rect x="3" y="7" width="2.5" height="1.4" fill="#fff"/><path d="M8 17.5 V12.5 L9.2 9.8 H16 L17.5 12.5 V17.5" fill="none" stroke="#fff" stroke-width="1.5"/><rect x="8" y="12.5" width="9.5" height="3" fill="#fff"/><rect x="11" y="13.4" width="3.5" height="1.2" fill="#0070c8"/></svg><span>Действия</span></div>
  <div class="nav" style="left:704px;width:60px"><svg style="left:21px" width="18" height="18" viewBox="0 0 18 18"><rect x="0.1" y="0.8" width="6.6" height="6.6" fill="none" stroke="#fff" stroke-width="1.7"/><rect x="0.1" y="10.6" width="6.6" height="6.6" fill="none" stroke="#fff" stroke-width="1.7"/><rect x="10" y="1.2" width="7" height="2.3" fill="#fff"/><rect x="10" y="5.5" width="7" height="2.2" fill="#fff"/><path d="M10.5 14 L12.3 10.9 H15.7 L17.5 14 L15.7 17.1 H12.3 Z" fill="none" stroke="#fff" stroke-width="1.5"/><circle cx="14" cy="14" r="1.1" fill="#fff"/></svg><span>Правила</span></div>
  <div class="nav" style="left:773px;width:60px"><svg style="left:21px" width="18" height="18" viewBox="0 0 18 18"><rect x="0" y="0" width="17.7" height="18" fill="#fff"/><g fill="#0a6cc0"><rect x="1.2" y="2.2" width="1.9" height="1.9"/><rect x="1.2" y="8.2" width="1.9" height="1.9"/><rect x="1.2" y="14" width="1.9" height="1.9"/><rect x="6.4" y="2.4" width="9.8" height="1.6" rx="0.5"/><rect x="6.4" y="8.4" width="9.8" height="1.6" rx="0.5"/><rect x="6.4" y="14.2" width="9.8" height="1.6" rx="0.5"/></g><rect x="0" y="5.9" width="17.7" height="0.5" fill="#b8d4ee"/><rect x="0" y="11.9" width="17.7" height="0.5" fill="#b8d4ee"/></svg><span>Настройки</span></div>

  
<svg class="abs" style="left:1031px;top:20px" width="13" height="13" viewBox="0 0 13 13"><path d="M5 0.5 H8 V5 H10.8 L6.5 9 L2.2 5 H5 Z" fill="#fff"/><path d="M0.5 8.5 H3.5 L6.5 11 L9.5 8.5 H12.5 V12.5 H0.5 Z" fill="#fff"/></svg>
  <div class="abs" style="left:1048px;top:10px;width:34px;height:11px;border-radius:6px;background:#e8453c;color:#fff;font-size:9px;line-height:11px;text-align:center">999+</div>
  <svg class="abs" style="left:1059px;top:19px" width="14" height="14" viewBox="0 0 14 14"><path d="M2.5 12 V8.5 C2.5 5.5 4.5 3.5 7 3.5 C9.5 3.5 11.5 5.5 11.5 8.5 V12 Z" fill="#fff"/><rect x="1.2" y="11.6" width="11.6" height="2" rx="0.5" fill="#fff"/><circle cx="7" cy="1.3" r="1" fill="#fff"/><circle cx="1.8" cy="3.2" r="0.9" fill="#fff"/><circle cx="12.2" cy="3.2" r="0.9" fill="#fff"/><path d="M5 8 C5 6.5 5.8 5.5 6.8 5.3" stroke="#0070c8" stroke-width="0.8" fill="none"/></svg>
  <svg class="abs" style="left:1089px;top:21px" width="12" height="11" viewBox="0 0 12 11"><g fill="#fff"><rect x="0" y="0" width="3.5" height="3"/><rect x="4.25" y="0" width="3.5" height="3"/><rect x="8.5" y="0" width="3.5" height="3"/><rect x="0" y="4" width="3.5" height="3"/><rect x="4.25" y="4" width="3.5" height="3"/><rect x="8.5" y="4" width="3.5" height="3"/><rect x="0" y="8" width="3.5" height="3"/><rect x="4.25" y="8" width="3.5" height="3"/><rect x="8.5" y="8" width="3.5" height="3"/></g></svg>
  <svg class="abs" style="left:1117px;top:20px" width="15" height="13" viewBox="0 0 15 13"><path d="M5 0.5 C5.5 1.8 6.3 2.3 7.5 2.3 C8.7 2.3 9.5 1.8 10 0.5 L14.6 2.5 L13.2 6 L11.5 5.5 V12.5 H3.5 V5.5 L1.8 6 L0.4 2.5 Z" fill="#fff"/></svg>
  <svg class="abs" style="left:1147px;top:22px" width="13" height="10" viewBox="0 0 13 10"><rect x="0" y="0" width="13" height="10" rx="0.8" fill="#fff"/><path d="M0.3 0.8 L6.5 5.8 L12.7 0.8" fill="none" stroke="#0070c8" stroke-width="0.9"/></svg>
  <svg class="abs" style="left:1174px;top:20px" width="17" height="12" viewBox="0 0 17 12"><path d="M3.8 11.8 C1.7 11.8 0.3 10.4 0.3 8.6 C0.3 6.9 1.6 5.6 3.2 5.5 C3.6 2.5 6 0.3 8.9 0.3 C11.5 0.3 13.6 2.1 14.2 4.5 C15.8 5 16.8 6.5 16.8 8.2 C16.8 10.2 15.2 11.8 13.2 11.8 Z" fill="#fff"/></svg>
  <div class="abs" style="left:1201px;top:20px;color:#fff;font-size:11.5px;white-space:nowrap">admin</div>
  <svg class="abs" style="left:1240px;top:24px" width="10" height="6" viewBox="0 0 10 6"><path d="M0 0 H10 L5 5.5 Z" fill="#fff"/></svg>
  <svg class="abs" style="left:1256px;top:20px" width="13" height="13" viewBox="0 0 13 13"><path d="M3.8 2.8 C2.2 3.8 1.1 5.5 1.1 7.4 C1.1 10.4 3.5 12 6.5 12 C9.5 12 11.9 10.4 11.9 7.4 C11.9 5.5 10.8 3.8 9.2 2.8" fill="none" stroke="#fff" stroke-width="1.7" stroke-linecap="round"/><path d="M6.5 0.9 V6.6" stroke="#fff" stroke-width="1.8" stroke-linecap="round"/></svg>

</div>
</body></html>
